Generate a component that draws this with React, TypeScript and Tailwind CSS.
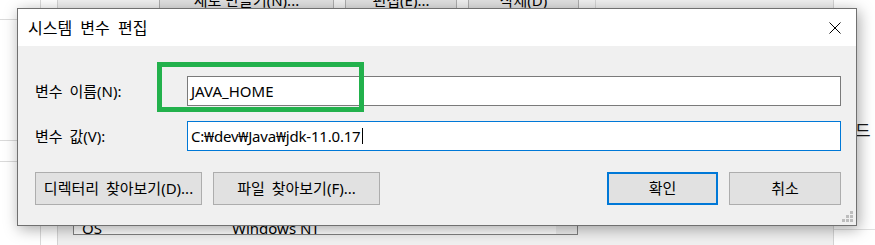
import React from "react";

function ResizeGrip() {
  return (
    <svg width="12" height="12" viewBox="0 0 12 12" className="absolute right-[2px] bottom-[2px]">
      <rect x="8" y="0" width="3" height="3" fill="#bdbdbd" />
      <rect x="4" y="4" width="3" height="3" fill="#bdbdbd" />
      <rect x="8" y="4" width="3" height="3" fill="#bdbdbd" />
      <rect x="0" y="8" width="3" height="3" fill="#bdbdbd" />
      <rect x="4" y="8" width="3" height="3" fill="#bdbdbd" />
      <rect x="8" y="8" width="3" height="3" fill="#bdbdbd" />
    </svg>
  );
}

function BgButton({ w, children }: { w: string; children: React.ReactNode }) {
  return (
    <div className={`${w} h-[32px] shrink-0 bg-[#e1e1e1] border border-[#adadad] flex items-center justify-center text-[15px] text-black`}>
      {children}
    </div>
  );
}

export default function App() {
  return (
    <div className="relative w-[875px] h-[245px] overflow-hidden bg-white font-['Noto_Sans','Noto_Sans_CJK_KR',sans-serif] text-black">
      {/* left window fragment */}
      <div className="absolute left-0 top-0 w-[41px] h-full bg-white border-r border-[#dadada] flex flex-col">
        <div className="mt-[19px] h-px bg-[#dadada]" />
        <div className="mt-[120px] h-px bg-[#dadada]" />
        <div className="mt-[20px] h-px bg-[#dadada]" />
      </div>

      {/* background window (환경 변수) */}
      <div className="absolute left-[57px] top-[-30px] w-[777px] h-[300px] bg-[#f0f0f0] border-l border-[#d4d4d4] border-r border-[#9a9a9a] flex flex-col">
        <div className="mt-[14px] flex items-start pl-[101px] gap-[11px]">
          <BgButton w="w-[175px]">새로 만들기(N)...</BgButton>
          <BgButton w="w-[112px]">편집(E)...</BgButton>
          <BgButton w="w-[111px]">삭제(D)</BgButton>
          <div className="ml-[5px] w-px h-[32px] bg-[#d4d4d4]" />
        </div>
        <div className="mt-[84px] ml-[15px] w-[505px] h-[135px] bg-white border border-[#828282] flex flex-col justify-end overflow-hidden">
          <div className="flex items-center h-[22px] mb-[-5px] text-[15px]">
            <span className="w-[158px] pl-[8px]">OS</span>
            <span className="flex-1">Windows NT</span>
            <div className="w-[21px] h-full bg-[#f0f0f0]" />
          </div>
        </div>
      </div>

      {/* right window fragment */}
      <div className="absolute left-[834px] top-0 w-[41px] h-full bg-white flex flex-col">
        <div className="mt-[120px] ml-[21px] text-[17px] leading-[22px] text-[#1a1a1a]">드</div>
        <div className="mt-[87px] h-px bg-[#e0e0e0]" />
      </div>

      {/* dialog */}
      <div className="absolute left-[17px] top-[8px] w-[840px] h-[218px] flex flex-col border border-[#707070] bg-[#f0f0f0] shadow-[2px_3px_14px_rgba(0,0,0,0.35)]">
        <div className="h-[37px] shrink-0 bg-white flex items-center justify-between pl-[10px] pr-[15px]">
          <span className="text-[16px] [word-spacing:4px]">시스템 변수 편집</span>
          <svg width="12" height="12" viewBox="0 0 12 12">
            <path d="M0.5 0.5L11.5 11.5M11.5 0.5L0.5 11.5" stroke="#000" strokeWidth="1" fill="none" />
          </svg>
        </div>
        <div className="relative flex-1 flex flex-col pl-[17px] pr-[15px] pt-[30px] text-[15px]">
          <div className="flex items-center h-[30px]">
            <span className="w-[152px] shrink-0 [word-spacing:3px]">변수 이름(N):</span>
            <div className="relative flex-1 h-[30px]">
              <div className="h-full border border-[#7a7a7a] bg-white flex items-center pl-[3px]">JAVA_HOME</div>
              <div className="absolute left-[-30px] top-[-14px] w-[207px] h-[50px] border-[5px] border-[#22b14c] z-10" />
            </div>
          </div>
          <div className="mt-[15px] flex items-center h-[30px]">
            <span className="w-[152px] shrink-0 [word-spacing:3px]">변수 값(V):</span>
            <div className="flex-1 h-[30px] border border-[#0078d7] bg-white flex items-center pl-[3px]">
              <span className="tracking-[-0.2px]">C:₩dev₩Java₩jdk-11.0.17</span>
              <span className="ml-[2px] w-px h-[16px] bg-black" />
            </div>
          </div>
          <div className="mt-[21px] flex h-[33px] gap-[11px]">
            <button className="w-[167px] h-full bg-[#e1e1e1] border border-[#adadad] [word-spacing:3px]">디렉터리 찾아보기(D)...</button>
            <button className="w-[167px] h-full bg-[#e1e1e1] border border-[#adadad] [word-spacing:3px]">파일 찾아보기(F)...</button>
            <button className="ml-auto w-[111px] h-full bg-[#e1e1e1] border-2 border-[#0078d7]">확인</button>
            <button className="w-[112px] h-full bg-[#e1e1e1] border border-[#adadad]">취소</button>
          </div>
          <ResizeGrip />
        </div>
      </div>
    </div>
  );
}
